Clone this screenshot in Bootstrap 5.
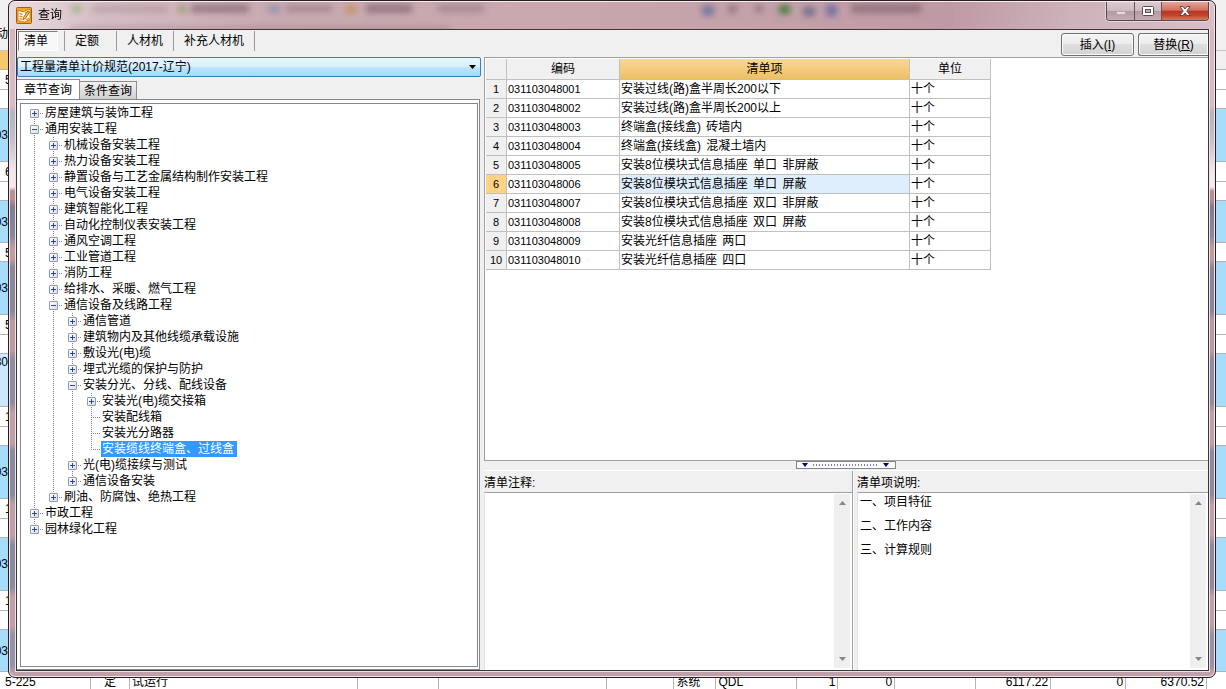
<!DOCTYPE html>
<html lang="zh-CN">
<head>
<meta charset="utf-8">
<meta name="viewport" content="width=device-width, initial-scale=1">
<title>查询</title>
<link href="https://cdn.jsdelivr.net/npm/bootstrap@5.3.0/dist/css/bootstrap.min.css" rel="stylesheet">
<style>
  :root { --face: #f0f0f0; --line: #a0a0a0; --cell: #c0c0c0; --ink: #000; }
  body { font: 12px/16px "Liberation Sans", "Noto Sans CJK SC", sans-serif; color: var(--ink); background: #fff; }
  button, select, textarea { font: inherit; color: inherit; border-radius: 0; }

  /* host application, seen around the dialog */
  .host-top { height: 50px; background: #f0f0f0; }
  .host-head { height: 20px; border-top: 1px solid #c4c4c4; border-bottom: 1px solid #b4b4b4; background: linear-gradient(90deg, #f5c870 50%, #f0f0f0 50%); }
  .band { border-bottom: 1px solid #b4b4b4; background: #fff; }
  .band-a { height: 20px; line-height: 20px; }
  .band-b { height: 19px; line-height: 20px; }
  .band-mid { height: 42px; background: #a8dcfb; }
  .band-tall { height: 53px; background: #a8dcfb; }
  .band-now { background: linear-gradient(90deg, #cce8ff 50%, #a8dcfb 50%); }
  .edge { width: 8px; }
  .inset { padding-left: 5px; }
  .host-row { display: grid; height: 20px; line-height: 21px;
    grid-template-columns: 91fr 39fr 228fr 81fr 168fr 68fr 42fr 81fr 41fr 57fr 81fr 75fr 75fr 81fr 19fr; }
  .host-row > div { border-right: 1px solid #b4b4b4; padding: 0 2px; min-width: 0; white-space: nowrap; }
  .host-row > .inset { padding-left: 5px; }

  /* dialog frame */
  .dlg { top: 0; left: 8px; right: 10px; bottom: 11px; padding: 0 6px 6px 7px; border: 1px solid #2b1c22; border-radius: 7px;
    box-shadow: inset 0 0 0 1px #f3e6ea;
    background: linear-gradient(180deg, #d3b4bd 0, #d9bcc4 105px, #b5b3c2 112px, #c4c0cc 140px, #f4e8ec 170px, #f6eaee 186px, #b98f98 190px,
      #b98f98 198px, #807d90 206px, #8d899c 236px, #c09ca3 246px, #c09ca3 258px, #8a8698 266px, #8a8698 310px, #bb9aa2 320px, #bb9aa2 350px,
      #8f8c9f 358px, #8f8c9f 402px, #c0a1a9 412px, #c0a1a9 442px, #8d8a9e 450px, #8d8a9e 494px, #c0a1a9 504px, #c0a1a9 534px,
      #8d8a9e 544px, #8d8a9e 586px, #c0a1a9 596px, #c0a1a9 624px, #9592a6 634px, #9592a6 664px, #c0a1a9 672px); }
  .dlg-title { height: 28px; margin: 0 -5px 0 -6px; padding: 0 5px 0 5px; border-top: 1px solid #f7edf0;
    background: linear-gradient(100deg, #e9dde0 0, #d6bfc5 90px, #c9aab1 260px, #c9a7af 46%, #c3a0a8 66%, #bf9aa4 78%, #cdb2b9 88%, #d8bfc5 100%);
    border-radius: 6px 6px 0 0; overflow: hidden; }
  .haze { inset: 0; width: 100%; height: 28px; }
  .cap-text { padding: 5px 0 0 5px; }
  .dlg-body { border: 1px solid #40343b; background: var(--face); box-shadow: 0 0 0 1px #efe2e6; min-height: 0; }
  .caps { height: 19px; border: 1px solid #54464c; border-top: 0; border-radius: 0 0 4px 4px; overflow: hidden; box-shadow: 0 0 0 1px #e7d5da; }
  .cap { border: 0; padding: 0; width: 27px; background: linear-gradient(#dccdd1 0, #cdb9bf 48%, #b3999f 50%, #c6adb3 100%); }
  .cap + .cap { border-left: 1px solid #65555b; }
  .caps .cap-x { width: 47px; background: linear-gradient(#e5a498 0, #d2705f 46%, #b93421 50%, #c5442c 75%, #d77d52 100%); }
  .cap svg { display: block; margin: 0 auto; }

  /* toolbar */
  .tools { height: 27px; }
  .kind { height: 20px; margin-top: 1px; border: 0; border-right: 1px solid #9a9a9a; background: none; padding: 0 10px; text-align: left; min-width: 52px; }
  .kind-on { width: 40px; min-width: 0; margin-left: 1px; padding: 0 5px; border: 1px solid #808080; border-right-color: #fff; border-bottom-color: #fff; background: #f8f8f8; }
  .kind-gap { width: 7px; height: 20px; margin-top: 1px; border-right: 1px solid #9a9a9a; }
  .act { height: 23px; width: 73px; margin-top: 3px; padding: 0; border: 1px solid #707070; border-radius: 3px;
    background: linear-gradient(#f4f4f4 0, #ededed 48%, #dfdfdf 50%, #d2d2d2 100%); box-shadow: inset 0 0 0 1px #fafafa; }
  .act-end { width: 70px; border-right: 0; border-radius: 3px 0 0 3px; }

  .split { display: grid; grid-template-columns: 464fr 3px 724fr; min-height: 0; }
  .pane { min-height: 0; }
  .lib { height: 20px; width: 100%; padding: 0 20px 0 2px; border: 1px solid #3c7fb1; border-radius: 2px; appearance: none; outline: 0;
    background: url("data:image/svg+xml,%3Csvg xmlns='http://www.w3.org/2000/svg' width='7' height='4'%3E%3Cpath d='M0 0h7L3.500 4z'/%3E%3C/svg%3E") no-repeat right 4px center,
      linear-gradient(#eaf6fd 0, #d9f0fc 48%, #bee6fd 50%, #a7d9f5 100%); }
  .pages { height: 22px; }
  .pg { border: 1px solid #8c8e94; border-bottom: 0; padding: 0 4px; height: 18px; line-height: 18px; background: linear-gradient(#f2f2f2, #cfcfcf); border-left: 0; }
  .pg-on { height: 20px; padding: 0 7px; background: #fff; }
  .sheet { margin-right: 1px; padding: 3px 1px 2px 3px; border: 1px solid #828790; border-left: 0; background: #fff; min-height: 0; }
  .tree-box { border: 1px solid #828790; background: #fff; padding: 1px 0 0 9px; overflow: hidden; }

  /* tree: dotted guides are painted as backgrounds */
  .tree, .tree ul { list-style: none; margin: 0; padding: 0; }
  .tree ul { padding-left: 19px; }
  .tree li { background: repeating-linear-gradient(#808080 0 1px, transparent 1px 2px) 4px 0 / 1px 100% no-repeat; }
  .tree li:last-child { background-size: 1px 8px; }
  .tree > li:first-child { background-position: 4px 8px; }
  .node { height: 16px; display: flex; align-items: center; white-space: nowrap;
    background: repeating-linear-gradient(90deg, #808080 0 1px, transparent 1px 2px) 4px 8px / 9px 1px no-repeat; }
  .node > span { margin-left: 5px; padding: 0 3px 0 1px; }
  .leaf > span { margin-left: 14px; }
  .node .hit { background: #3399ff; color: #fff; }
  .tg { width: 9px; height: 9px; padding: 0; border: 1px solid #8f9bb0; border-radius: 1px; display: flex;
    background: linear-gradient(135deg, #fff, #dcdcdc); }
  .tg::before { content: ""; width: 5px; height: 5px; margin: 1px;
    background: linear-gradient(#2a4a9a, #2a4a9a) 0 2px / 5px 1px no-repeat, linear-gradient(#2a4a9a, #2a4a9a) 2px 0 / 1px 5px no-repeat; }
  .tg-open::before { background: linear-gradient(#2a4a9a, #2a4a9a) 0 2px / 5px 1px no-repeat; }

  /* item grid */
  .grid-box { border: 1px solid var(--line); border-right: 0; padding: 1px 0 0 1px; background: #fff; overflow: hidden; flex: 402 1 0; }
  .items { table-layout: fixed; width: 505px; border-collapse: separate; border-spacing: 0; }
  .items th, .items td { height: 19px; padding: 0 1px; border-right: 1px solid var(--cell); border-bottom: 1px solid var(--cell);
    font-weight: 400; line-height: 18px; white-space: nowrap; overflow: hidden; }
  .items thead th { height: 21px; text-align: center; background: var(--face); }
  .items tbody th { text-align: center; padding: 0; background: var(--face); font-size: 11px; }
  .items .code { font-size: 11px; }
  .items thead .sorted { background: linear-gradient(#f9d798, #efbf62); }
  .items tbody .picked { background: #ffd384; }
  .items .focus-cell { background: #dfeefc; }
  .sp { margin-left: 2px; }

  .grip { height: 10px; border-bottom: 1px solid #fff; }
  .grip button { width: 100px; height: 8px; padding: 0; border: 1px solid #828790; background: #fbfbfb; display: flex; align-items: center; justify-content: center; }
  .notes { display: grid; grid-template-columns: 369fr 355fr; flex: 200 1 0; min-height: 0; }
  .note-l { border-right: 1px solid var(--line); }
  .note-r { padding-left: 3px; border-left: 1px solid #fff; }
  .notes label { height: 21px; padding-top: 4px; }
  .memo { border-top: 1px solid var(--line); border-left: 1px solid #e3e3e3; background: #fff; padding: 1px 2px 2px 0; min-height: 0; }
  .memo textarea { border: 0; outline: 0; resize: none; padding: 0 2px; line-height: 24px; margin-top: -4px; overflow: hidden; background: transparent; min-width: 0; }
  .bar { width: 16px; background: #efefef; }
  .bar button { border: 0; padding: 0; height: 18px; background: none; display: flex; align-items: center; justify-content: center; }
</style>
</head>
<body class="vh-100 overflow-hidden position-relative">

<!-- host application -->
<div class="w-100 overflow-hidden" aria-hidden="true">
  <div class="host-top d-flex align-items-end"><div class="edge d-flex justify-content-end overflow-hidden pb-1 mb-1">动</div></div>
  <div class="host-head"></div>
  <div class="band band-a inset">5</div><div class="band band-b"></div>
  <div class="band band-tall d-flex align-items-center"><div class="edge d-flex justify-content-end overflow-hidden">03</div></div>
  <div class="band band-a inset">6</div><div class="band band-b"></div>
  <div class="band band-mid d-flex align-items-center"><div class="edge d-flex justify-content-end overflow-hidden">03</div></div>
  <div class="band band-b inset">5</div>
  <div class="band band-tall d-flex align-items-center"><div class="edge d-flex justify-content-end overflow-hidden">03</div></div>
  <div class="band band-a inset">5</div><div class="band band-b"></div>
  <div class="band band-tall band-now"><div class="edge d-flex justify-content-end overflow-hidden">30</div></div>
  <div class="band band-a inset">1</div><div class="band band-b"></div>
  <div class="band band-tall d-flex align-items-center"><div class="edge d-flex justify-content-end overflow-hidden">03</div></div>
  <div class="band band-a inset">1</div><div class="band band-b"></div>
  <div class="band band-tall d-flex align-items-center"><div class="edge d-flex justify-content-end overflow-hidden">03</div></div>
  <div class="band band-a inset">1</div><div class="band band-b"></div>
  <div class="band band-mid d-flex align-items-center"><div class="edge d-flex justify-content-end overflow-hidden">03</div></div>
  <div class="host-row">
    <div class="inset">5-225</div><div class="text-center">定</div><div>试运行</div><div></div><div></div><div></div>
    <div>系统</div><div>QDL</div><div class="text-end">1</div><div class="text-end">0</div><div></div>
    <div class="text-end">6117.22</div><div class="text-end">0</div><div class="text-end">6370.52</div><div class="border-0"></div>
  </div>
</div>

<!-- query dialog -->
<div class="dlg position-absolute d-flex flex-column" role="dialog" aria-labelledby="dlgTitle">
  <header class="dlg-title position-relative d-flex flex-shrink-0">
    <svg class="haze position-absolute" aria-hidden="true">
      <defs><filter id="soft" x="-20%" y="-100%" width="140%" height="300%"><feGaussianBlur stdDeviation="3"/></filter></defs>
      <g filter="url(#soft)">
        <g fill="#6f5560" opacity=".55">
          <rect x="82" y="4" width="76" height="6" opacity=".5"/><rect x="181" y="2" width="58" height="9"/>
          <rect x="276" y="3" width="46" height="7" opacity=".7"/><rect x="356" y="2" width="46" height="9"/>
          <rect x="428" y="3" width="46" height="7" opacity=".7"/><rect x="841" y="2" width="70" height="9"/>
          <rect x="718" y="3" width="9" height="8"/><rect x="745" y="3" width="8" height="7"/>
        </g>
        <rect x="62" y="3" width="9" height="8" fill="#a5b489"/><rect x="168" y="3" width="9" height="8" fill="#a5a080"/>
        <rect x="258" y="3" width="12" height="8" fill="#9a95ae"/><rect x="336" y="3" width="10" height="9" fill="#c39668"/>
        <rect x="692" y="3" width="12" height="11" fill="#7d7a9c"/><rect x="769" y="3" width="11" height="9" fill="#4e7a45"/>
        <rect x="793" y="5" width="12" height="9" fill="#75708f"/><rect x="816" y="3" width="11" height="11" fill="#7670a0"/>
        <rect x="60" y="25" width="380" height="4" fill="#83666f" opacity=".45"/>
      </g>
    </svg>
    <svg class="position-relative mt-1" width="18" height="19" viewBox="0 0 18 19" aria-hidden="true">
      <rect x="1.500" y="1.500" width="15" height="16" rx="1" fill="#f5a623" stroke="#a85b10"/>
      <path d="M3 4.500l5.500 1.200L15 3v10.500L9.500 16 3 14.500z" fill="#fff8df" stroke="#b4640f" stroke-width=".7"/>
      <path d="M4.500 7.500l3 1M4.500 10l3 1M4.500 12.500l3 1M10 7l3-1M11 13.500l3-1" stroke="#d9780d" stroke-width="1.200" fill="none"/>
      <path d="M8.500 11.500L12.800 5l1.700 1-4.200 6.500-2 1z" fill="#ffd24a" stroke="#8d4a0a" stroke-width=".8"/>
    </svg>
    <span id="dlgTitle" class="cap-text position-relative">查询</span>
    <div class="caps position-relative d-flex ms-auto">
      <button class="cap" type="button" aria-label="最小化"><svg width="14" height="12"><rect x="2.500" y="6.500" width="9" height="3" fill="#e6dadd" stroke="#b8a3a9"/></svg></button>
      <button class="cap" type="button" aria-label="最大化"><svg width="14" height="12"><rect x="1.500" y="1.500" width="11" height="9" rx="1" fill="#fff" stroke="#554e58"/><rect x="4.500" y="4.500" width="5" height="3" fill="#c9b1b7" stroke="#554e58"/></svg></button>
      <button class="cap cap-x" type="button" aria-label="关闭"><svg width="14" height="12"><path d="M2 1.500h3l2 2.500 2-2.500h3L8.800 6l3.400 4.500h-3.200L7 8l-2 2.500H1.800L5.200 6z" fill="#fff" stroke="#5a3a3c" stroke-width=".9"/></svg></button>
    </div>
  </header>

  <main class="dlg-body flex-fill d-flex flex-column overflow-hidden">
    <div class="tools d-flex flex-shrink-0">
      <button class="kind kind-on" type="button">清单</button>
      <div class="kind-gap"></div>
      <button class="kind" type="button">定额</button>
      <button class="kind" type="button">人材机</button>
      <button class="kind" type="button">补充人材机</button>
      <div class="ms-auto d-flex gap-1">
        <button class="act" type="button">插入(<u>I</u>)</button>
        <button class="act act-end" type="button">替换(<u>R</u>)</button>
      </div>
    </div>

    <div class="split flex-fill">
      <section class="pane d-flex flex-column">
        <select class="lib flex-shrink-0" aria-label="规范"><option>工程量清单计价规范(2017-辽宁)</option></select>
        <div class="pages d-flex align-items-end flex-shrink-0" role="tablist">
          <button class="pg pg-on" type="button" role="tab" aria-selected="true">章节查询</button>
          <button class="pg" type="button" role="tab" aria-selected="false">条件查询</button>
        </div>
        <div class="sheet flex-fill d-flex flex-column">
          <div class="tree-box flex-fill">
            <ul class="tree" id="tree"></ul>
          </div>
        </div>
      </section>
      <div></div>
      <section class="pane d-flex flex-column">
        <div class="grid-box">
          <table class="items">
            <colgroup><col style="width:21px"><col style="width:113px"><col style="width:290px"><col style="width:81px"></colgroup>
            <thead><tr><th></th><th scope="col">编码</th><th scope="col" class="sorted">清单项</th><th scope="col">单位</th></tr></thead>
            <tbody>
              <tr><th scope="row">1</th><td class="code">031103048001</td><td>安装过线(路)盒半周长200以下</td><td>十个</td></tr>
              <tr><th scope="row">2</th><td class="code">031103048002</td><td>安装过线(路)盒半周长200以上</td><td>十个</td></tr>
              <tr><th scope="row">3</th><td class="code">031103048003</td><td>终端盒(接线盒) <span class="sp">砖墙内</span></td><td>十个</td></tr>
              <tr><th scope="row">4</th><td class="code">031103048004</td><td>终端盒(接线盒) <span class="sp">混凝土墙内</span></td><td>十个</td></tr>
              <tr><th scope="row">5</th><td class="code">031103048005</td><td>安装8位模块式信息插座 <span class="sp">单口</span> <span class="sp">非屏蔽</span></td><td>十个</td></tr>
              <tr><th scope="row" class="picked">6</th><td class="code">031103048006</td><td class="focus-cell">安装8位模块式信息插座 <span class="sp">单口</span> <span class="sp">屏蔽</span></td><td>十个</td></tr>
              <tr><th scope="row">7</th><td class="code">031103048007</td><td>安装8位模块式信息插座 <span class="sp">双口</span> <span class="sp">非屏蔽</span></td><td>十个</td></tr>
              <tr><th scope="row">8</th><td class="code">031103048008</td><td>安装8位模块式信息插座 <span class="sp">双口</span> <span class="sp">屏蔽</span></td><td>十个</td></tr>
              <tr><th scope="row">9</th><td class="code">031103048009</td><td>安装光纤信息插座 <span class="sp">两口</span></td><td>十个</td></tr>
              <tr><th scope="row">10</th><td class="code">031103048010</td><td>安装光纤信息插座 <span class="sp">四口</span></td><td>十个</td></tr>
            </tbody>
          </table>
        </div>
        <div class="grip d-flex justify-content-center align-items-center flex-shrink-0">
          <button type="button" aria-label="折叠下方面板">
            <svg width="88" height="4"><path d="M0 0h6L3 4zM81 0h6l-3 4z" fill="#000080"/><path d="M11 2h66" stroke="#000080" stroke-dasharray="1 2"/></svg>
          </button>
        </div>
        <div class="notes">
          <div class="note-l d-flex flex-column">
            <label for="memoA">清单注释:</label>
            <div class="memo d-flex flex-fill">
              <textarea id="memoA" class="flex-fill"></textarea>
              <div class="bar d-flex flex-column justify-content-between">
                <button type="button" aria-label="向上"><svg width="7" height="4"><path d="M0 4h7L3.500 0z" fill="#868686"/></svg></button>
                <button type="button" aria-label="向下"><svg width="7" height="4"><path d="M0 0h7L3.500 4z" fill="#868686"/></svg></button>
              </div>
            </div>
          </div>
          <div class="note-r d-flex flex-column">
            <label for="memoB">清单项说明:</label>
            <div class="memo d-flex flex-fill">
              <textarea id="memoB" class="flex-fill">一、项目特征
二、工作内容
三、计算规则</textarea>
              <div class="bar d-flex flex-column justify-content-between">
                <button type="button" aria-label="向上"><svg width="7" height="4"><path d="M0 4h7L3.500 0z" fill="#868686"/></svg></button>
                <button type="button" aria-label="向下"><svg width="7" height="4"><path d="M0 0h7L3.500 4z" fill="#868686"/></svg></button>
              </div>
            </div>
          </div>
        </div>
      </section>
    </div>
  </main>
</div>

<script src="https://cdn.jsdelivr.net/npm/bootstrap@5.3.0/dist/js/bootstrap.bundle.min.js"></script>
<script>
  // [label, state, children]; state: "+" collapsed, "-" expanded, "" leaf, "*" selected leaf
  const nodes = [
    ["房屋建筑与装饰工程", "+"],
    ["通用安装工程", "-", [
      ["机械设备安装工程", "+"], ["热力设备安装工程", "+"], ["静置设备与工艺金属结构制作安装工程", "+"],
      ["电气设备安装工程", "+"], ["建筑智能化工程", "+"], ["自动化控制仪表安装工程", "+"],
      ["通风空调工程", "+"], ["工业管道工程", "+"], ["消防工程", "+"], ["给排水、采暖、燃气工程", "+"],
      ["通信设备及线路工程", "-", [
        ["通信管道", "+"], ["建筑物内及其他线缆承载设施", "+"], ["敷设光(电)缆", "+"], ["埋式光缆的保护与防护", "+"],
        ["安装分光、分线、配线设备", "-", [
          ["安装光(电)缆交接箱", "+"], ["安装配线箱", ""], ["安装光分路器", ""], ["安装缆线终端盒、过线盒", "*"]
        ]],
        ["光(电)缆接续与测试", "+"], ["通信设备安装", "+"]
      ]],
      ["刷油、防腐蚀、绝热工程", "+"]
    ]],
    ["市政工程", "+"],
    ["园林绿化工程", "+"]
  ];
  function build(list, host) {
    for (const [label, state, kids] of list) {
      const li = document.createElement("li");
      const row = document.createElement("div");
      row.className = "node";
      if (state === "+" || state === "-") {
        const b = document.createElement("button");
        b.type = "button";
        b.className = state === "-" ? "tg tg-open" : "tg";
        b.setAttribute("aria-label", (state === "-" ? "折叠" : "展开") + label);
        row.append(b);
      } else row.classList.add("leaf");
      const s = document.createElement("span");
      s.textContent = label;
      if (state === "*") s.className = "hit";
      row.append(s);
      li.append(row);
      if (kids) { const ul = document.createElement("ul"); build(kids, ul); li.append(ul); }
      host.append(li);
    }
  }
  build(nodes, document.getElementById("tree"));
</script>
</body>
</html>
